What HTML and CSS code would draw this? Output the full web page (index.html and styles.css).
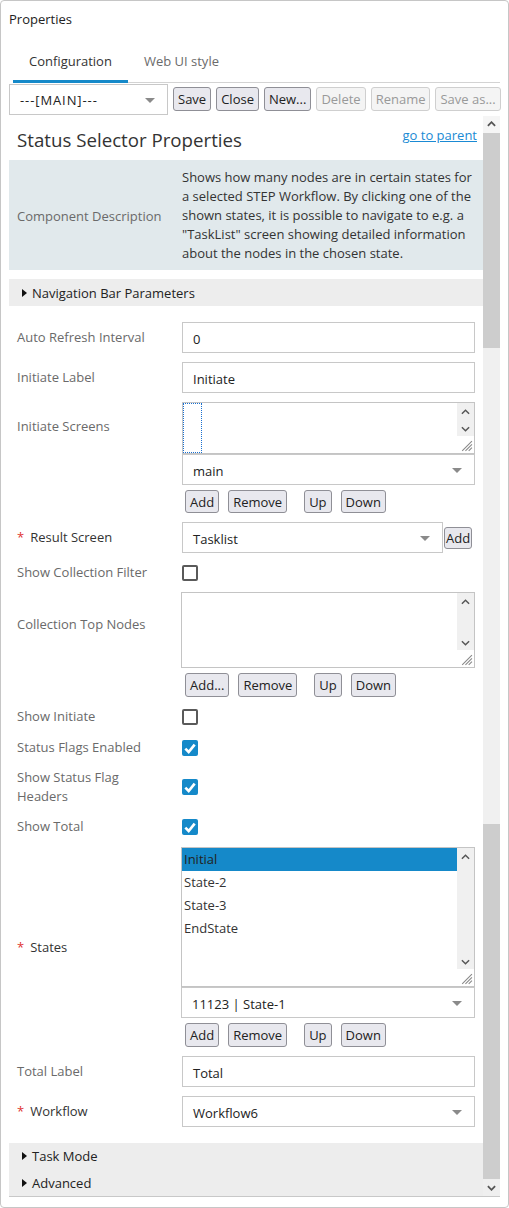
FILE: index.html
```html
<!DOCTYPE html>
<html>
<head>
<meta charset="utf-8">
<link rel="stylesheet" href="styles.css">
</head>
<body>
<div class="panel">
  <div class="title">Properties</div>
  <div class="tabs">
    <div class="tab active">Configuration</div>
    <div class="tab">Web UI style</div>
  </div>
  <div class="toolbar">
    <div class="select main-select"><span>---[MAIN]---</span><i class="caret"></i></div>
    <button class="btn">Save</button>
    <button class="btn">Close</button>
    <button class="btn">New...</button>
    <button class="btn disabled">Delete</button>
    <button class="btn disabled">Rename</button>
    <button class="btn disabled">Save as...</button>
  </div>
  <div class="scroller">
    <div class="content">
      <div class="heading">
        <h1>Status Selector Properties</h1>
        <a class="link">go to parent</a>
      </div>
      <div class="desc">
        <div class="desc-label">Component Description</div>
        <div class="desc-text">Shows how many nodes are in certain states for a selected STEP Workflow. By clicking one of the shown states, it is possible to navigate to e.g. a "TaskList" screen showing detailed information about the nodes in the chosen state.</div>
      </div>
      <div class="bar first-bar"><i class="tri"></i>Navigation Bar Parameters</div>

      <div class="form">
        <div class="row">
          <div class="label">Auto Refresh Interval</div>
          <div class="input">0</div>
        </div>
        <div class="row">
          <div class="label">Initiate Label</div>
          <div class="input">Initiate</div>
        </div>
        <div class="row">
          <div class="label top lbl-screens">Initiate Screens</div>
          <div class="field">
            <div class="listbox lb-screens">
              <div class="focus"></div>
              <div class="strip"><svg class="chev" viewBox="0 0 10 6"><polyline points="1,5 5,1 9,5"/></svg><svg class="chev" viewBox="0 0 10 6"><polyline points="1,1 5,5 9,1"/></svg></div>
              <svg class="grip" viewBox="0 0 12 12"><line x1="11" y1="2" x2="2" y2="11"/><line x1="11" y1="5" x2="5" y2="11"/><line x1="11" y1="8" x2="8" y2="11"/></svg>
            </div>
            <div class="select attached"><span>main</span><i class="caret"></i></div>
            <div class="btnrow short">
              <button class="btn sm">Add</button>
              <button class="btn sm">Remove</button>
              <button class="btn sm grp">Up</button>
              <button class="btn sm">Down</button>
            </div>
          </div>
        </div>
        <div class="row">
          <div class="label req"><b>*</b>Result Screen</div>
          <div class="field inline">
            <div class="select result"><span>Tasklist</span><i class="caret"></i></div>
            <button class="btn tiny">Add</button>
          </div>
        </div>
        <div class="row check-row short">
          <div class="label">Show Collection Filter</div>
          <div><span class="cb"></span></div>
        </div>
        <div class="row">
          <div class="label top lbl-coll">Collection Top Nodes</div>
          <div class="field">
            <div class="listbox lb-coll">
              <div class="strip"><svg class="chev" viewBox="0 0 10 6"><polyline points="1,5 5,1 9,5"/></svg><svg class="chev" viewBox="0 0 10 6"><polyline points="1,1 5,5 9,1"/></svg></div>
              <svg class="grip" viewBox="0 0 12 12"><line x1="11" y1="2" x2="2" y2="11"/><line x1="11" y1="5" x2="5" y2="11"/><line x1="11" y1="8" x2="8" y2="11"/></svg>
            </div>
            <div class="btnrow">
              <button class="btn sm">Add...</button>
              <button class="btn sm">Remove</button>
              <button class="btn sm grp">Up</button>
              <button class="btn sm">Down</button>
            </div>
          </div>
        </div>
        <div class="row check-row short">
          <div class="label">Show Initiate</div>
          <div><span class="cb"></span></div>
        </div>
        <div class="row check-row">
          <div class="label">Status Flags Enabled</div>
          <div><span class="cb on"><svg viewBox="0 0 12 12"><polyline points="2.5,6.5 5,9 9.5,3.5"/></svg></span></div>
        </div>
        <div class="row check-row">
          <div class="label">Show Status Flag<br>Headers</div>
          <div><span class="cb on"><svg viewBox="0 0 12 12"><polyline points="2.5,6.5 5,9 9.5,3.5"/></svg></span></div>
        </div>
        <div class="row check-row">
          <div class="label">Show Total</div>
          <div><span class="cb on"><svg viewBox="0 0 12 12"><polyline points="2.5,6.5 5,9 9.5,3.5"/></svg></span></div>
        </div>
        <div class="row states-row">
          <div class="label req"><b>*</b>States</div>
          <div class="field">
            <div class="listbox lb-states">
              <div class="items">
                <div class="item sel">Initial</div>
                <div class="item">State-2</div>
                <div class="item">State-3</div>
                <div class="item">EndState</div>
              </div>
              <div class="strip"><svg class="chev" viewBox="0 0 10 6"><polyline points="1,5 5,1 9,5"/></svg><svg class="chev" viewBox="0 0 10 6"><polyline points="1,1 5,5 9,1"/></svg></div>
              <svg class="grip" viewBox="0 0 12 12"><line x1="11" y1="2" x2="2" y2="11"/><line x1="11" y1="5" x2="5" y2="11"/><line x1="11" y1="8" x2="8" y2="11"/></svg>
            </div>
            <div class="select attached"><span>11123 | State-1</span><i class="caret"></i></div>
            <div class="btnrow">
              <button class="btn sm">Add</button>
              <button class="btn sm">Remove</button>
              <button class="btn sm grp">Up</button>
              <button class="btn sm">Down</button>
            </div>
          </div>
        </div>
        <div class="row">
          <div class="label">Total Label</div>
          <div class="input">Total</div>
        </div>
        <div class="row">
          <div class="label req"><b>*</b>Workflow</div>
          <div class="select"><span>Workflow6</span><i class="caret"></i></div>
        </div>
      </div>

      <div class="bar bar-task"><i class="tri"></i>Task Mode</div>
      <div class="bar bar-adv"><i class="tri"></i>Advanced</div>
    </div>
    <div class="vscroll">
      <div class="arrow up"><svg viewBox="0 0 10 6"><polyline points="1,5 5,1 9,5"/></svg></div>
      <div class="thumb t1"></div>
      <div class="track"></div>
      <div class="thumb t2"></div>
      <div class="arrow down"><svg viewBox="0 0 10 6"><polyline points="1,1 5,5 9,1"/></svg></div>
    </div>
  </div>
</div>
</body>
</html>
```

FILE: styles.css
```css
* { box-sizing: border-box; }
html, body { margin: 0; padding: 0; background: #fff; }
body {
  font-family: "Segoe UI", "Open Sans", "Noto Sans", sans-serif;
  font-size: 13px;
  color: #333;
}
.panel {
  width: 509px;
  height: 1208px;
  border: 1px solid #c6c6c6;
  border-radius: 4px;
  padding: 0 8px;
  overflow: hidden;
}
.title {
  padding-top: 8px;
  line-height: 20px;
  height: 28px;
  color: #222;
}
.tabs {
  display: flex;
  margin-left: 4px;
  border-bottom: 1px solid #d3d3d3;
}
.tab {
  padding: 22px 16px 9px;
  line-height: 20px;
  color: #6b6b6b;
  border-bottom: 3px solid transparent;
  margin-bottom: -1px;
}
.tab.active {
  color: #333;
  border-bottom-color: #1589c9;
}
.toolbar {
  display: flex;
  align-items: center;
  height: 32px;
  margin-left: -4px;
}
.toolbar .main-select { width: 159px; margin-left: 4px; height: 31px; flex: none; }
.main-select span { letter-spacing: 0.9px; }
.toolbar .btn { margin-left: 5px; height: 24px; padding: 0 4px; flex: none; }

.btn {
  font-family: inherit;
  font-size: 13px;
  color: #222;
  background: #e8e8ee;
  border: 1px solid #8f8f96;
  border-radius: 3px;
  height: 23px;
  padding: 0 5px;
  line-height: 20px;
  margin: 0;
  white-space: nowrap;
}
.btn.disabled {
  color: #999;
  background: #f4f4f4;
  border-color: #cfcfcf;
}

.select {
  position: relative;
  height: 31px;
  border: 1px solid #c8c8c8;
  background: #fff;
  padding-left: 10px;
  display: flex;
  align-items: center;
  color: #222;
}
.select span { padding-top: 2px; }
.caret {
  position: absolute;
  right: 12px;
  top: 13px;
  width: 0; height: 0;
  border-left: 5px solid transparent;
  border-right: 5px solid transparent;
  border-top: 5px solid #8a8a8a;
}

.scroller {
  display: flex;
  height: 1081px;
  margin-top: 1px;
  border-bottom: 1px solid #c8c8c8;
  overflow: hidden;
}
.content {
  width: 474px;
  flex: none;
}
.vscroll {
  width: 17px;
  flex: none;
  display: flex;
  flex-direction: column;
  background: #f0f0f0;
}
.vscroll .arrow {
  height: 17px;
  display: flex;
  align-items: center;
  justify-content: center;
  background: #f5f5f5;
}
.vscroll .arrow.down { background: #efefef; margin-top: auto; }
.vscroll .arrow svg { width: 9px; height: 6px; }
.vscroll .arrow polyline { fill: none; stroke: #555; stroke-width: 2; }
.thumb { background: #cdcdcd; }
.t1 { height: 215px; }
.track { height: 477px; background: #f0f0f0; }
.t2 { height: 355px; }

.heading {
  display: flex;
  justify-content: space-between;
  align-items: flex-start;
  height: 44px;
  padding: 0 6px 0 8px;
}
.heading h1 {
  margin: 0;
  font-weight: normal;
  font-size: 18.7px;
  line-height: 26px;
  padding-top: 11px;
  color: #333;
}
.link {
  color: #1a8ad4;
  text-decoration: underline;
  padding-top: 9px;
  line-height: 20px;
}
.desc {
  display: grid;
  grid-template-columns: 165px 1fr;
  background: #e1e9ec;
  padding: 8px 8px 8px 8px;
  height: 110px;
}
.desc-label {
  color: #6a6a6a;
  align-self: center;
}
.desc-text {
  line-height: 19px;
  color: #333;
}
.bar {
  height: 27px;
  background: #ededed;
  display: flex;
  align-items: center;
  padding-left: 13px;
  color: #222;
}
.first-bar { margin-top: 9px; }
.tri {
  width: 0; height: 0;
  border-top: 4px solid transparent;
  border-bottom: 4px solid transparent;
  border-left: 5px solid #111;
  margin-right: 5px;
}
.bar-task { margin-top: 16px; height: 26px; margin-left: -1px; padding-left: 14px; }
.bar-adv { margin-left: -1px; padding-left: 14px; }

.form {
  padding: 16px 8px 0 8px;
  display: flex;
  flex-direction: column;
  gap: 9px;
}
.row {
  display: grid;
  grid-template-columns: 164px 294px;
  align-items: center;
}
.label {
  color: #6a6a6a;
  line-height: 19px;
}
.label.req { color: #333; }
.label.req b {
  color: #e0332f;
  font-weight: normal;
  margin-right: 6px;
}
.label.top { align-self: start; }
.lbl-screens { margin-top: 15px; }
.lbl-coll { margin-top: 23px; }
.input {
  height: 31px;
  border: 1px solid #c8c8c8;
  padding: 2px 0 0 10px;
  display: flex;
  align-items: center;
  color: #222;
  margin-left: 1px;
}
.row > .select { margin-left: 1px; }
.field { display: flex; flex-direction: column; }
.field.inline { flex-direction: row; align-items: center; margin-left: 1px; }
.select.result { width: 261px; }
.btn.tiny { height: 22px; padding: 0 1px; margin-left: 1px; line-height: 18px; }
.check-row { height: 23px; }
.check-row.short { height: 21px; }
.check-row:has(br) { height: 38px; }
.cb {
  display: block;
  width: 16px;
  height: 16px;
  border: 2px solid #5a5a5a;
  border-radius: 2px;
  margin-left: 1px;
}
.cb.on {
  background: #1589c9;
  border: none;
}
.cb.on svg { width: 16px; height: 16px; display: block; }
.cb.on polyline { fill: none; stroke: #fff; stroke-width: 2; }

.listbox {
  position: relative;
  border: 1px solid #c4c4c4;
  background: #fff;
}
.lb-screens { height: 52px; margin-left: 1px; }
.lb-coll { height: 76px; }
.lb-states { height: 140px; }
.field .select.attached { margin-left: 1px; }
.lb-states + .select.attached { margin-left: 0; }
.strip {
  position: absolute;
  right: 0;
  top: 0;
  bottom: 17px;
  width: 17px;
  background: #f0f0f0;
  display: flex;
  flex-direction: column;
  justify-content: space-between;
  align-items: center;
  padding: 6px 0 4px;
}
.chev { width: 9px; height: 6px; }
.chev polyline { fill: none; stroke: #555; stroke-width: 1.6; }
.grip {
  position: absolute;
  right: 1px;
  bottom: 1px;
  width: 13px;
  height: 13px;
}
.grip line { stroke: #888; stroke-width: 1; }
.focus {
  position: absolute;
  left: 0;
  top: 0;
  width: 19px;
  height: 50px;
  border: 1px dotted #1a70d0;
}
.items { padding-right: 17px; }
.item { height: 23px; line-height: 23px; padding-left: 2px; color: #333; }
.item.sel { background: #1589c9; color: #222; }

.btnrow {
  display: flex;
  margin-top: 5px;
  padding-left: 4px;
  gap: 9px;
}
.btn.sm { height: 24px; padding: 0 4px; }
.btnrow.short .btn.sm { height: 23px; }
.btn.grp { margin-left: 8px; }
```
